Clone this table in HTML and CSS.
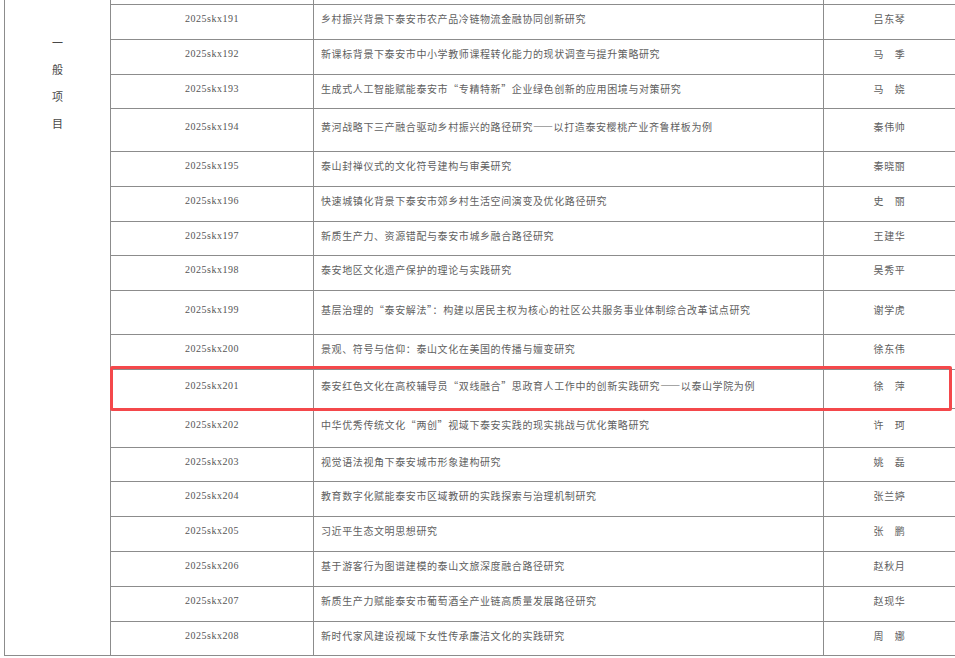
FILE: index.html
```html
<!DOCTYPE html>
<html lang="zh-CN">
<head>
    <meta charset="UTF-8">
    <meta name="viewport" content="width=device-width, initial-scale=1.0">
    <title>2025年度泰安市社会科学课题立项名单</title>
    <link rel="stylesheet" href="styles.css">
</head>
<body>

<table class="list">
    <colgroup>
        <col class="c-side">
        <col class="c-code">
        <col class="c-title">
        <col class="c-name">
    </colgroup>
    <tbody>
        <tr class="cut">
            <td class="side" rowspan="19">
                <div class="side-label"><span>一</span><span>般</span><span>项</span><span>目</span></div>
            </td>
            <td></td><td></td><td></td>
        </tr>
        <tr class="h35"><td class="code">2025skx191</td><td class="title">乡村振兴背景下泰安市农产品冷链物流金融协同创新研究</td><td class="name">吕东琴</td></tr>
        <tr class="h35"><td class="code">2025skx192</td><td class="title">新课标背景下泰安市中小学教师课程转化能力的现状调查与提升策略研究</td><td class="name">马　季</td></tr>
        <tr class="h34"><td class="code">2025skx193</td><td class="title">生成式人工智能赋能泰安市“专精特新”企业绿色创新的应用困境与对策研究</td><td class="name">马　娆</td></tr>
        <tr class="h43"><td class="code">2025skx194</td><td class="title">黄河战略下三产融合驱动乡村振兴的路径研究——以打造泰安樱桃产业齐鲁样板为例</td><td class="name">秦伟帅</td></tr>
        <tr class="h35"><td class="code">2025skx195</td><td class="title">泰山封禅仪式的文化符号建构与审美研究</td><td class="name">秦晓丽</td></tr>
        <tr class="h35"><td class="code">2025skx196</td><td class="title">快速城镇化背景下泰安市郊乡村生活空间演变及优化路径研究</td><td class="name">史　丽</td></tr>
        <tr class="h34"><td class="code">2025skx197</td><td class="title">新质生产力、资源错配与泰安市城乡融合路径研究</td><td class="name">王建华</td></tr>
        <tr class="h35"><td class="code">2025skx198</td><td class="title">泰安地区文化遗产保护的理论与实践研究</td><td class="name">吴秀平</td></tr>
        <tr class="h44"><td class="code">2025skx199</td><td class="title">基层治理的“泰安解法”：构建以居民主权为核心的社区公共服务事业体制综合改革试点研究</td><td class="name">谢学虎</td></tr>
        <tr class="h35"><td class="code">2025skx200</td><td class="title">景观、符号与信仰：泰山文化在美国的传播与嬗变研究</td><td class="name">徐东伟</td></tr>
        <tr class="h39 picked"><td class="code">2025skx201<div class="mark"></div></td><td class="title">泰安红色文化在高校辅导员“双线融合”思政育人工作中的创新实践研究——以泰山学院为例</td><td class="name">徐　萍</td></tr>
        <tr class="h39"><td class="code">2025skx202</td><td class="title">中华优秀传统文化“两创”视域下泰安实践的现实挑战与优化策略研究</td><td class="name">许　珂</td></tr>
        <tr class="h34"><td class="code">2025skx203</td><td class="title">视觉语法视角下泰安城市形象建构研究</td><td class="name">姚　磊</td></tr>
        <tr class="h35"><td class="code">2025skx204</td><td class="title">教育数字化赋能泰安市区域教研的实践探索与治理机制研究</td><td class="name">张兰婷</td></tr>
        <tr class="h35"><td class="code">2025skx205</td><td class="title">习近平生态文明思想研究</td><td class="name">张　鹏</td></tr>
        <tr class="h35"><td class="code">2025skx206</td><td class="title">基于游客行为图谱建模的泰山文旅深度融合路径研究</td><td class="name">赵秋月</td></tr>
        <tr class="h35"><td class="code">2025skx207</td><td class="title">新质生产力赋能泰安市葡萄酒全产业链高质量发展路径研究</td><td class="name">赵现华</td></tr>
        <tr class="h34"><td class="code">2025skx208</td><td class="title">新时代家风建设视域下女性传承廉洁文化的实践研究</td><td class="name">周　娜</td></tr>
    </tbody>
</table>

</body>
</html>
```

FILE: styles.css
```css
body {
    margin: 0;
    padding: 0;
    background-color: #ffffff;
    font-family: "Noto Sans CJK SC", "Liberation Serif", serif;
    color: #606060;
}
.list {
    margin-left: 4px;
    width: 951px;
    table-layout: fixed;
    border-collapse: collapse;
    border-top: none;
}
.c-side {
    width: 106px;
}
.c-code {
    width: 203px;
}
.c-title {
    width: 510px;
}
.c-name {
    width: 132px;
}
.list td {
    border: 1px solid #8c8c8c;
    padding: 0 0 6px 0;
    vertical-align: middle;
    font-size: 10px;
    line-height: 14px;
    white-space: nowrap;
}
.list tr.cut td {
    border-top: none;
    height: 4px;
    padding: 0;
}
.list td.side {
    vertical-align: top;
    padding: 0;
    border-top: none;
    border-bottom: 1px solid #8c8c8c;
}
.side-label {
    padding-top: 29px;
    text-align: center;
    font-size: 11px;
    color: #484848;
}
.side-label span {
    display: block;
    line-height: 27px;
}
.list td.code {
    text-align: center;
    font-family: "Liberation Serif", serif;
    font-size: 10px;
    letter-spacing: 0.5px;
    color: #555555;
}
.list td.title {
    padding-left: 7px;
    letter-spacing: 0.6px;
}
.list td.name {
    text-align: center;
    letter-spacing: 0.6px;
}
.h34 { height: 34px; }
.h35 { height: 35px; }
.h39 { height: 39px; }
.h43 { height: 43px; }
.h44 { height: 44px; }

/* red box round the picked row */
.picked td.code {
    position: relative;
}
.mark {
    position: absolute;
    left: -1px;
    top: -4px;
    width: 842px;
    height: 45px;
    box-sizing: border-box;
    border: 3px solid #f4484b;
    border-radius: 2px;
    pointer-events: none;
}
```
